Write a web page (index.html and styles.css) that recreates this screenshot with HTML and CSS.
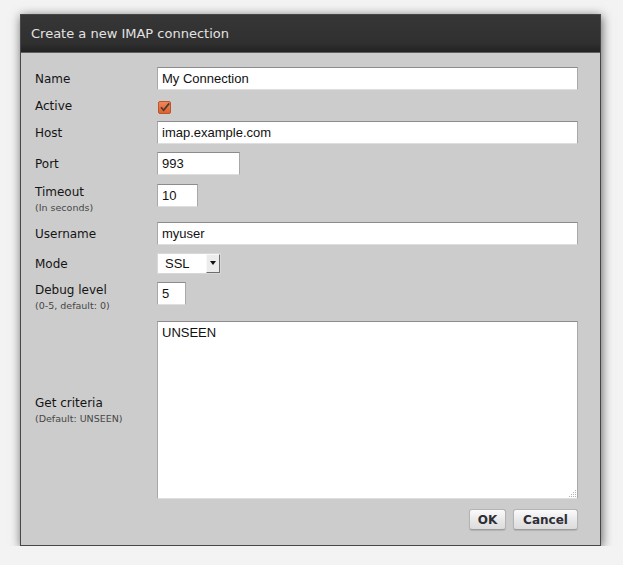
FILE: index.html
```html
<!DOCTYPE html>
<html>
<head>
<meta charset="utf-8">
<link rel="stylesheet" href="styles.css">
</head>
<body>
<div class="dialog">
  <div class="titlebar">Create a new IMAP connection</div>
  <div class="content">
    <div class="row">
      <div class="lbl">Name</div>
      <input class="field field-wide" type="text" value="My Connection">
    </div>
    <div class="row row-check">
      <div class="lbl">Active</div>
      <div class="check-cell">
        <svg class="check" width="13" height="13" viewBox="0 0 13 13">
          <defs>
            <linearGradient id="og" x1="0" y1="0" x2="0" y2="1">
              <stop offset="0" stop-color="#f3875a"/>
              <stop offset="1" stop-color="#dc5f2c"/>
            </linearGradient>
          </defs>
          <rect x="0.5" y="0.5" width="12" height="12" rx="1.5" fill="url(#og)" stroke="#b9562b"/>
          <path d="M3 6.3 L5.6 9.2 L11.2 2.4" fill="none" stroke="#4a3a34" stroke-width="1.7"/>
        </svg>
      </div>
    </div>
    <div class="row">
      <div class="lbl">Host</div>
      <input class="field field-wide" type="text" value="imap.example.com">
    </div>
    <div class="row">
      <div class="lbl">Port</div>
      <input class="field field-port" type="text" value="993">
    </div>
    <div class="row row-top row-timeout">
      <div class="lbl">Timeout<span class="sub">(In seconds)</span></div>
      <input class="field field-timeout" type="text" value="10">
    </div>
    <div class="row">
      <div class="lbl">Username</div>
      <input class="field field-wide" type="text" value="myuser">
    </div>
    <div class="row">
      <div class="lbl">Mode</div>
      <div class="select">
        <span class="select-text">SSL</span>
        <span class="select-btn">
          <svg width="6" height="4" viewBox="0 0 6 4"><path d="M0 0 H6 L3 4 Z" fill="#111"/></svg>
        </span>
      </div>
    </div>
    <div class="row row-top row-debug">
      <div class="lbl">Debug level<span class="sub">(0-5, default: 0)</span></div>
      <input class="field field-debug" type="text" value="5">
    </div>
    <div class="row">
      <div class="lbl">Get criteria<span class="sub">(Default: UNSEEN)</span></div>
      <div class="area-wrap">
        <textarea class="area">UNSEEN</textarea>
        <svg class="grip" width="9" height="9" viewBox="0 0 9 9">
          <g fill="#b5b5b5">
            <rect x="7" y="1" width="1" height="1"/>
            <rect x="5" y="3" width="1" height="1"/>
            <rect x="7" y="3" width="1" height="1"/>
            <rect x="3" y="5" width="1" height="1"/>
            <rect x="5" y="5" width="1" height="1"/>
            <rect x="7" y="5" width="1" height="1"/>
            <rect x="1" y="7" width="1" height="1"/>
            <rect x="3" y="7" width="1" height="1"/>
            <rect x="5" y="7" width="1" height="1"/>
            <rect x="7" y="7" width="1" height="1"/>
          </g>
        </svg>
      </div>
    </div>
    <div class="buttons">
      <button class="btn btn-ok">OK</button>
      <button class="btn btn-cancel">Cancel</button>
    </div>
  </div>
</div>
</body>
</html>
```

FILE: styles.css
```css
html, body {
  margin: 0;
  padding: 0;
  background: #f3f3f3;
}

body {
  padding: 14px 0 0 20px;
  font-family: "DejaVu Sans", Verdana, sans-serif;
}

.dialog {
  width: 581px;
  box-sizing: border-box;
  border: 1px solid #474747;
  background: #cccccc;
  box-shadow: 1px 2px 10px rgba(0, 0, 0, 0.6);
}

.titlebar {
  height: 37px;
  line-height: 37px;
  padding-left: 10px;
  font-size: 13px;
  color: #e2e2e2;
  background: linear-gradient(#363636, #303030 75%, #222222);
  border-bottom: 1px solid #5e5e5e;
}

.content {
  padding: 14px 22px 15px 14px;
  display: flex;
  flex-direction: column;
  gap: 8px;
}

.row {
  display: grid;
  grid-template-columns: 122px 1fr;
  align-items: center;
}

.row-top {
  align-items: start;
}

.row-check {
  height: 15px;
}

.row-timeout {
  margin-top: 1px;
}

.row-debug {
  margin-bottom: 1px;
}

.lbl {
  font-size: 12px;
  line-height: 16px;
  color: #141414;
}

.sub {
  display: block;
  font-size: 9.5px;
  line-height: 12px;
  padding-top: 2px;
  color: #474747;
}

.field {
  box-sizing: border-box;
  height: 23px;
  margin: 0;
  padding: 0 4px;
  border: 1px solid;
  border-color: #8c8c8c #a8a8a8 #dedede #a8a8a8;
  background: #fff;
  font-family: "Liberation Sans", Arial, sans-serif;
  font-size: 13px;
  color: #111;
  outline: none;
}

.field-wide { width: 421px; }
.field-port { width: 83px; }
.field-timeout { width: 41px; }
.field-debug { width: 29px; }

.check-cell {
  align-self: start;
  height: 15px;
}

.check {
  display: block;
  margin: 3px 0 0 1px;
}

.select {
  box-sizing: border-box;
  width: 64px;
  height: 21px;
  display: flex;
  background: #fff;
  border: 1px solid #d8d8d8;
  font-family: "Liberation Sans", Arial, sans-serif;
  font-size: 13px;
  color: #111;
}

.select-text {
  flex: 1;
  padding-left: 7px;
  line-height: 19px;
}

.select-btn {
  box-sizing: border-box;
  width: 14px;
  display: flex;
  justify-content: center;
  padding-top: 6px;
  background: #ececec;
  border-left: 1px solid #f8f8f8;
  border-top: 1px solid #f8f8f8;
  border-right: 1px solid #6e6e6e;
  border-bottom: 1px solid #6e6e6e;
}

.select-btn svg {
  display: block;
}

.area-wrap {
  position: relative;
  width: 421px;
  height: 178px;
}

.area {
  box-sizing: border-box;
  width: 421px;
  height: 178px;
  margin: 0;
  padding: 3px 4px;
  border: 1px solid;
  border-color: #8c8c8c #a8a8a8 #dedede #a8a8a8;
  background: #fff;
  font-family: "Liberation Sans", Arial, sans-serif;
  font-size: 13px;
  color: #111;
  resize: none;
  outline: none;
  display: block;
}

.grip {
  position: absolute;
  right: 1px;
  bottom: 1px;
  display: block;
}

.buttons {
  display: flex;
  justify-content: flex-end;
  gap: 7px;
  margin-top: 2px;
}

.btn {
  box-sizing: border-box;
  height: 21px;
  margin: 0;
  padding: 0;
  border: 1px solid #b4b4b4;
  border-bottom-color: #9c9c9c;
  border-radius: 3px;
  background: linear-gradient(#fbfbfb, #e6e6e6 60%, #dcdcdc);
  box-shadow: 0 1px 1px rgba(0, 0, 0, 0.12);
  font-family: "DejaVu Sans", Verdana, sans-serif;
  font-weight: bold;
  font-size: 12px;
  color: #2e2e36;
}

.btn-ok { width: 37px; }
.btn-cancel { width: 65px; }
```
